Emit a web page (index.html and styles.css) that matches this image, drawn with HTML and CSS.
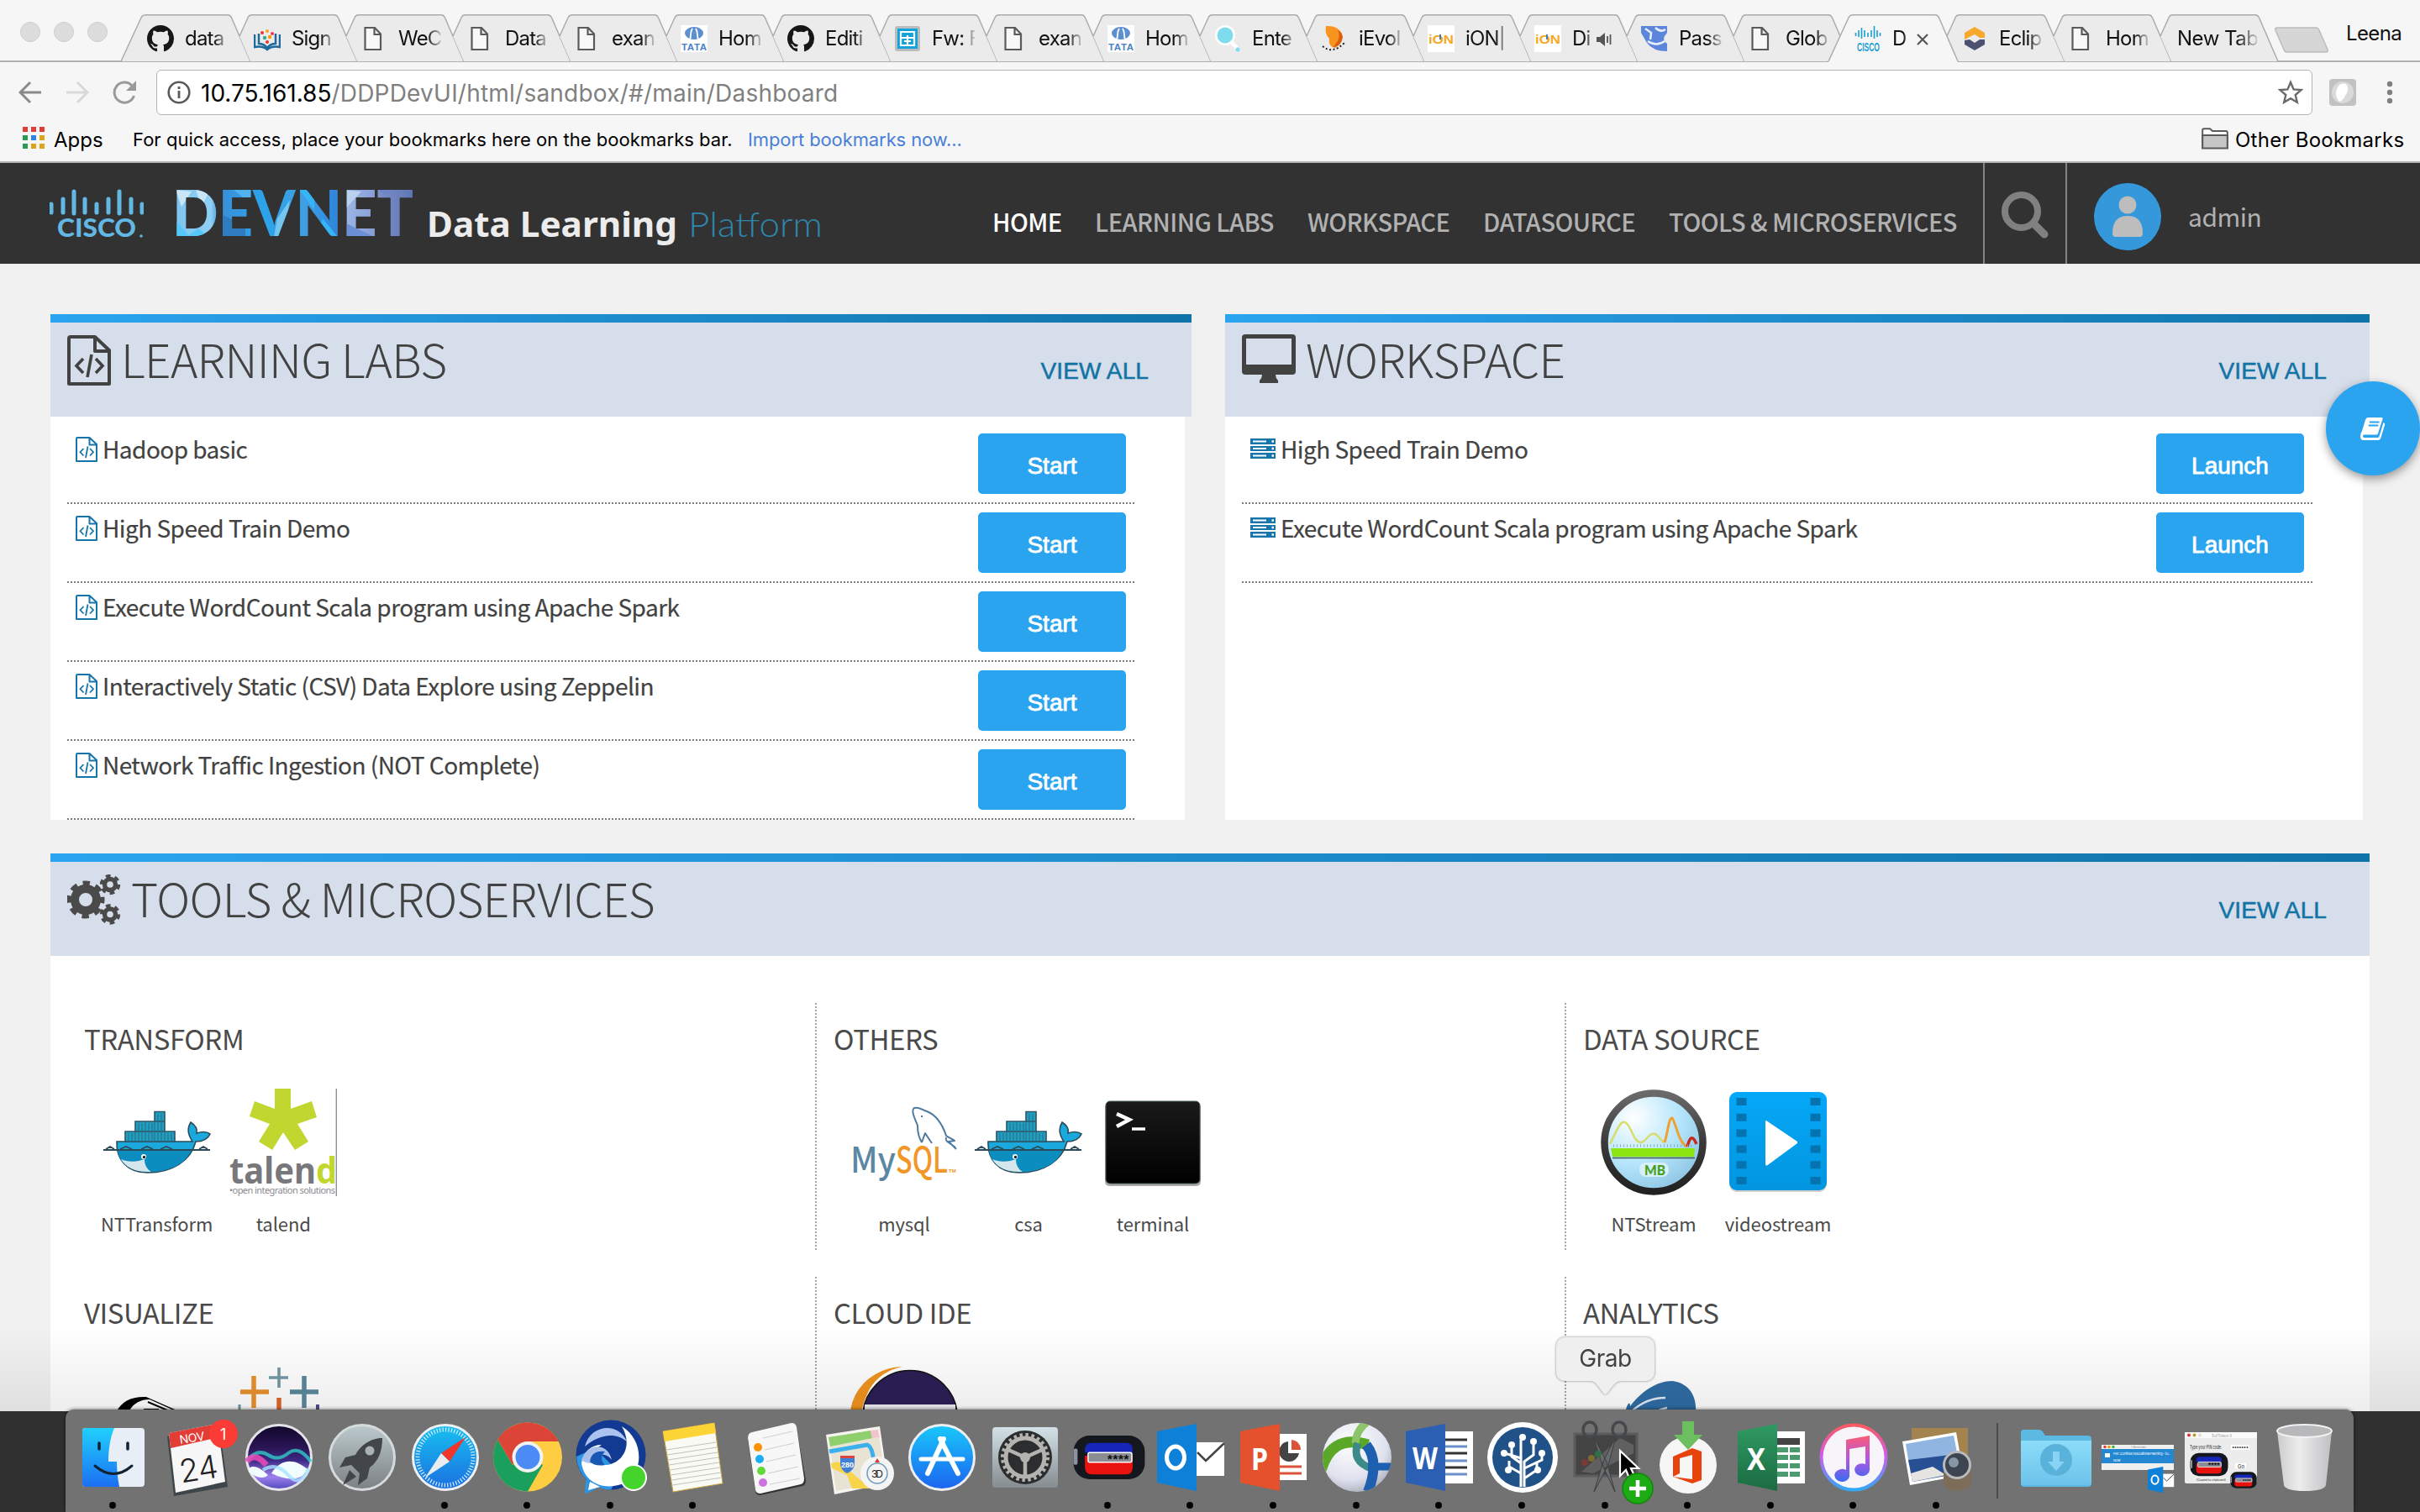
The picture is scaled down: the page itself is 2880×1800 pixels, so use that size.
FILE: index.html
```html
<!DOCTYPE html>
<html lang="en">
<head>
<meta charset="utf-8">
<title>Dashboard</title>
<link rel="stylesheet" href="styles.css">
</head>
<body>
<svg class="defs" aria-hidden="true">
  <defs>
    <linearGradient id="g-finder" x1="0" y1="0" x2="0" y2="1"><stop offset="0" stop-color="#1fd0fd"/><stop offset="1" stop-color="#1c6ff2"/></linearGradient>
    <linearGradient id="g-siri" x1="0" y1="0" x2="0" y2="1"><stop offset="0" stop-color="#10062a"/><stop offset=".35" stop-color="#2b1555"/><stop offset=".55" stop-color="#3d2a86"/><stop offset=".8" stop-color="#9f7fee"/><stop offset="1" stop-color="#4d48b8"/></linearGradient>
    <linearGradient id="g-rocket" x1="0" y1="0" x2="0" y2="1"><stop offset="0" stop-color="#bccacd"/><stop offset="1" stop-color="#7c8083"/></linearGradient>
    <linearGradient id="g-safari" x1="0" y1="0" x2="0" y2="1"><stop offset="0" stop-color="#17c0f0"/><stop offset="1" stop-color="#1b6fe0"/></linearGradient>
    <linearGradient id="g-store" x1="0" y1="0" x2="0" y2="1"><stop offset="0" stop-color="#19c8fb"/><stop offset="1" stop-color="#1c63ef"/></linearGradient>
    <linearGradient id="g-prefs" x1="0" y1="0" x2="0" y2="1"><stop offset="0" stop-color="#d3e2e8"/><stop offset="1" stop-color="#868c90"/></linearGradient>
    <linearGradient id="g-tunes" x1="0" y1="0" x2="0" y2="1"><stop offset="0" stop-color="#fb5b60"/><stop offset=".45" stop-color="#d45be8"/><stop offset="1" stop-color="#31a8f8"/></linearGradient>
    <linearGradient id="g-note" x1="0" y1="0" x2="0" y2="1"><stop offset="0" stop-color="#fb5c74"/><stop offset=".5" stop-color="#b556e0"/><stop offset="1" stop-color="#3a6bf0"/></linearGradient>
    <linearGradient id="g-folder" x1="0" y1="0" x2="0" y2="1"><stop offset="0" stop-color="#8bdcf9"/><stop offset="1" stop-color="#6cc3ea"/></linearGradient>
    <linearGradient id="g-trash" x1="0" y1="0" x2="1" y2="0"><stop offset="0" stop-color="#cfd0d2"/><stop offset=".4" stop-color="#f3f3f4"/><stop offset="1" stop-color="#c3c4c6"/></linearGradient>
    <linearGradient id="g-devnet" x1="0" y1="0" x2="1" y2="0"><stop offset="0" stop-color="#7cc4ee"/><stop offset=".16" stop-color="#8fd0f5"/><stop offset=".2" stop-color="#3a8fd8"/><stop offset=".38" stop-color="#2ca3ea"/><stop offset=".55" stop-color="#3f9fe2"/><stop offset=".68" stop-color="#2f86dc"/><stop offset=".71" stop-color="#9cb8e6"/><stop offset=".83" stop-color="#8b9fd8"/><stop offset=".86" stop-color="#7c8ec6"/><stop offset="1" stop-color="#5c76b4"/></linearGradient>
    <linearGradient id="g-video" x1="0" y1="0" x2="0" y2="1"><stop offset="0" stop-color="#05a8f8"/><stop offset="1" stop-color="#0295df"/></linearGradient>
    <linearGradient id="g-term" x1="0" y1="0" x2="0" y2="1"><stop offset="0" stop-color="#1a1a1a"/><stop offset="1" stop-color="#000"/></linearGradient>
    <linearGradient id="g-ring" x1="0" y1="0" x2="0" y2="1"><stop offset="0" stop-color="#6a6a6a"/><stop offset=".5" stop-color="#3a3a3a"/><stop offset="1" stop-color="#222"/></linearGradient>
    <radialGradient id="g-glass" cx=".3" cy=".25" r=".8"><stop offset="0" stop-color="#ffffff"/><stop offset=".6" stop-color="#b4e4fb"/><stop offset="1" stop-color="#8fc6e4"/></radialGradient>
    <radialGradient id="g-globe" cx=".4" cy=".3" r=".75"><stop offset="0" stop-color="#ffffff"/><stop offset=".7" stop-color="#dfe2ee"/><stop offset="1" stop-color="#a9adba"/></radialGradient>
    <linearGradient id="g-xl" x1="0" y1="0" x2="0" y2="1"><stop offset="0" stop-color="#2f9a63"/><stop offset="1" stop-color="#1b6b41"/></linearGradient>
    <clipPath id="c-devnet"><text class="devnet" x="205" y="87" textLength="287" lengthAdjust="spacingAndGlyphs">DEVNET</text></clipPath>
    <clipPath id="c-globe"><circle cx="49" cy="51" r="41"/></clipPath>

    <symbol id="tab" viewBox="0 0 156 57"><path class="tab-fill" d="M27 56L14 26L24.500 3Q26 .7 29 .7H127Q130 .7 131.500 4L153 56Z"/><path class="tab-line" d="M14 26L24.500 3Q26 .7 29 .7H127Q130 .7 131.500 4L154 56"/></symbol>
    <symbol id="doc" viewBox="0 0 32 32"><path d="M5.500 3H17l7 7.500V29H5.500Z M16.500 3V11H24" fill="#f8f8f8" stroke="#5a5a5a" stroke-width="2.200"/></symbol>
    <symbol id="github" viewBox="0 0 16 16"><path fill="#161616" d="M8 0C3.580 0 0 3.580 0 8c0 3.540 2.290 6.530 5.470 7.590.4.070.550-.170.550-.380 0-.190-.010-.820-.010-1.490-2.010.370-2.530-.490-2.690-.940-.090-.230-.480-.940-.820-1.130-.280-.150-.680-.520-.010-.530.630-.010 1.080.580 1.230.820.720 1.210 1.870.870 2.330.660.070-.520.280-.870.510-1.070-1.780-.2-3.640-.890-3.640-3.950 0-.870.310-1.590.820-2.150-.080-.2-.360-1.020.080-2.120 0 0 .670-.210 2.200.820.640-.180 1.320-.270 2-.270.680 0 1.360.090 2 .270 1.530-1.040 2.200-.820 2.200-.820.440 1.100.160 1.920.080 2.120.510.560.820 1.270.820 2.150 0 3.070-1.870 3.750-3.650 3.950.290.250.540.730.540 1.480 0 1.070-.010 1.930-.010 2.200 0 .210.150.460.550.380A8.013 8.013 0 0016 8c0-4.420-3.580-8-8-8z"/></symbol>
    <symbol id="tata" viewBox="0 0 32 32"><rect width="32" height="32" fill="#fff"/><ellipse cx="16" cy="9.500" rx="11" ry="7.500" fill="#5b8fd0"/><path d="M14 4C11 8 13 12 11 17M18 4C21 8 19 12 21 17" stroke="#fff" stroke-width="1.800" fill="none"/><text x="1" y="29.500" font-family="Liberation Sans" font-weight="700" font-size="11.500" fill="#4a7fc6" textLength="30">TATA</text></symbol>
    <symbol id="ion" viewBox="0 0 32 32"><rect width="32" height="32" fill="#fff"/><text x="1" y="22" font-family="Liberation Sans" font-weight="700" font-size="15" fill="#f6a821" textLength="30" lengthAdjust="spacingAndGlyphs">iON</text><path d="M15 11V17" stroke="#4a7abf" stroke-width="2"/></symbol>
    <symbol id="bars" viewBox="0 0 112 32"><path d="M2 18V28M16 12V28M29 3V29M42 12V28M56 18V28M70 12V28M83 3V29M97 12V28M110 18V28" stroke="currentColor" stroke-width="5" stroke-linecap="round"/></symbol>
    <symbol id="codefile" viewBox="0 0 52 60"><path d="M4 2H33L50 18V58H2V4Q2 2 4 2Z M33 2V19H50" fill="none" stroke="currentColor" stroke-width="4" stroke-linejoin="round"/><path d="M19 28L11 36.500L19 45M34 28L42 36.500L34 45M29 23L24 50" fill="none" stroke="currentColor" stroke-width="3.600"/></symbol>
    <symbol id="server" viewBox="0 0 30 24"><path d="M0 0H30V7H0ZM0 9H30V15H0ZM0 17H30V24H0Z" fill="#1676ab"/><path d="M3 3.500H19M3 12H19M3 20.500H19" stroke="#fff" stroke-width="2"/><path d="M25.500 3.500H28M25.500 12H28M25.500 20.500H28" stroke="#fff" stroke-width="2.500"/></symbol>
    <symbol id="docker" viewBox="0 0 128 128">
      <path d="M16 63H106C101 55 99 48 104 40C110 44 112 49 111 53C117 51 123 51 127 54C124 61 117 63 110 63C104 86 82 100 53 100C28 100 15 84 16 63Z" fill="#1ba8dc" stroke="#2c4a58" stroke-width="1.600"/>
      <path d="M17 73H105C97 91 78 99 53 99C30 99 18 87 17 73Z" fill="#0c8dbf"/>
      <path d="M21 84C30 88 41 87 49 84C49 91 52 96 57 99C38 100 27 94 21 84Z" fill="#d5e6ec"/>
      <path d="M0 73H127M3 72L8 69L13 72M20 72L27 69L34 72M45 72L52 69L59 72M68 72L75 69L82 72M114 72L119 69L124 72" stroke="#2c4a58" stroke-width="1.800" fill="none"/>
      <path d="M26 51H85V63H26ZM38 39H73V51H38ZM61 27.500H73V39H61Z" fill="#1f9fc2" stroke="#2c5566" stroke-width="1.600"/>
      <path d="M38 51V63M50 39V63M61 39V63M73 51V63M30 53V62M34 53V62M42 41V62M46 41V62M54 41V62M58 41V62M65 30V62M69 30V62M77 53V62M81 53V62" stroke="#2c6a80" stroke-width="1"/>
      <circle cx="48" cy="81" r="3" fill="#fff"/><circle cx="48.500" cy="81.500" r="1.700" fill="#222"/>
    </symbol>
    <symbol id="softtoken" viewBox="0 0 90 56"><rect x="1" y="1" width="88" height="54" rx="20" fill="#14181e"/><rect x="1" y="17" width="5" height="20" rx="2" fill="#8b929c"/><path d="M15 22V18Q15 10 24 10H66Q74 10 74 18V22Z" fill="#1726b8"/><path d="M15 26H74V40Q74 49 66 49H24Q15 49 15 40Z" fill="#e8120f"/><rect x="19" y="22" width="54" height="12" rx="2" fill="#8a8d93" stroke="#fff" stroke-width="1.500"/><text x="41" y="36" font-family="Liberation Mono" font-weight="700" font-size="16" fill="#111" textLength="30">****</text></symbol>
    <symbol id="office-o" viewBox="0 0 82 82"><path d="M46 22H80V62H46Z" fill="#fff"/><path d="M48 34L58 44L80 23" stroke="#444" stroke-width="2.500" fill="none"/><path d="M0 9L47 0V80L0 70Z" fill="#0f80d8"/><ellipse cx="22" cy="40" rx="10.500" ry="13" fill="none" stroke="#fff" stroke-width="5"/></symbol>
  </defs>
</svg>

<div class="browser">
  <div class="tabstrip">
    <div class="lights"><i></i><i></i><i></i></div>
    <div class="tabs">
      <div class="tab first"><svg class="shape" viewBox="0 0 156 57"><path class="tab-fill" d="M1 56L24.500 3Q26 .7 29 .7H127Q130 .7 131.500 4L153 56Z"/><path class="tab-line" d="M0 56L24.500 3Q26 .7 29 .7H127Q130 .7 131.500 4L154 56"/></svg><svg class="fav"><use href="#github"/></svg><span>data</span></div>
      <div class="tab"><svg class="shape"><use href="#tab"/></svg><svg class="fav" viewBox="0 0 32 32"><path d="M1 11V26Q10 24 16 29Q22 24 31 26V11M6 10V22Q12 22 16 27Q20 22 26 22V10" fill="none" stroke="#1d6a9c" stroke-width="2.500"/><g><circle cx="10" cy="9" r="2" fill="#e33"/><circle cx="16" cy="7" r="2" fill="#f5a623"/><circle cx="22" cy="10" r="2" fill="#e35"/><circle cx="13" cy="15" r="2.200" fill="#3a9"/><circle cx="19" cy="14" r="2.200" fill="#f90"/><circle cx="16" cy="20" r="2" fill="#e33"/></g></svg><span>Sign</span></div>
      <div class="tab"><svg class="shape"><use href="#tab"/></svg><svg class="fav"><use href="#doc"/></svg><span>WeC</span></div>
      <div class="tab"><svg class="shape"><use href="#tab"/></svg><svg class="fav"><use href="#doc"/></svg><span>Data</span></div>
      <div class="tab"><svg class="shape"><use href="#tab"/></svg><svg class="fav"><use href="#doc"/></svg><span>exan</span></div>
      <div class="tab"><svg class="shape"><use href="#tab"/></svg><svg class="fav"><use href="#tata"/></svg><span>Hom</span></div>
      <div class="tab"><svg class="shape"><use href="#tab"/></svg><svg class="fav"><use href="#github"/></svg><span>Editi</span></div>
      <div class="tab"><svg class="shape"><use href="#tab"/></svg><svg class="fav" viewBox="0 0 32 32"><rect x="1" y="1" width="30" height="30" rx="3" fill="#b9bdc0"/><rect x="4" y="4" width="24" height="24" fill="#14a3dc"/><path d="M8 8H24V24H8Z M8 15H24M16 12V24M12 19H20" fill="none" stroke="#fff" stroke-width="2.200"/></svg><span>Fw: F</span></div>
      <div class="tab"><svg class="shape"><use href="#tab"/></svg><svg class="fav"><use href="#doc"/></svg><span>exan</span></div>
      <div class="tab"><svg class="shape"><use href="#tab"/></svg><svg class="fav"><use href="#tata"/></svg><span>Hom</span></div>
      <div class="tab"><svg class="shape"><use href="#tab"/></svg><svg class="fav" viewBox="0 0 32 32"><path d="M17 17L27 27" stroke="#fff" stroke-width="5"/><circle cx="13" cy="12" r="12" fill="#fff"/><circle cx="13" cy="12" r="9.500" fill="#7fdcee"/><circle cx="28" cy="29" r="2.500" fill="#7fdcee"/></svg><span>Ente</span></div>
      <div class="tab"><svg class="shape"><use href="#tab"/></svg><svg class="fav" viewBox="0 0 32 32"><path d="M6 1Q20 0 25 10Q27 22 17 27Q8 25 10 16Q4 10 6 1Z" fill="#f7941d"/><path d="M20 6Q25 16 14 26Q24 26 26 14Q25 8 20 6Z" fill="#d95f12"/><path d="M2 25Q14 35 28 21" stroke="#222" stroke-width="2" stroke-dasharray="2 2.500" fill="none"/></svg><span>iEvol</span></div>
      <div class="tab"><svg class="shape"><use href="#tab"/></svg><svg class="fav"><use href="#ion"/></svg><span>iON|</span></div>
      <div class="tab sound"><svg class="shape"><use href="#tab"/></svg><svg class="fav"><use href="#ion"/></svg><span>Di</span><svg class="mute" viewBox="0 0 22 20"><path d="M1 7H5L11 2V18L5 13H1Z" fill="#555"/><path d="M14 6V14M17.500 4V16" stroke="#555" stroke-width="1.800"/></svg></div>
      <div class="tab"><svg class="shape"><use href="#tab"/></svg><svg class="fav" viewBox="0 0 32 32"><path d="M0 1H31V9L28 13Q25 18 31 22V31Q14 31 7 21L0 9Z" fill="#5b86dc"/><path d="M5 4L12 9L11 17M17 3Q23 9 29 5M8 19Q18 26 28 19" stroke="#e8effc" stroke-width="2.500" fill="none"/></svg><span>Pass</span></div>
      <div class="tab"><svg class="shape"><use href="#tab"/></svg><svg class="fav"><use href="#doc"/></svg><span>Glob</span></div>
      <div class="tab active"><svg class="shape" viewBox="0 0 156 57"><path class="tab-fill" d="M0 57L24.500 3Q26 .7 29 .7H127Q130 .7 131.500 4L154 57Z"/><path class="tab-line" d="M0 56L24.500 3Q26 .7 29 .7H127Q130 .7 131.500 4L154 56"/></svg><svg class="fav" viewBox="0 0 32 32"><path d="M1.500 9V13M5 6V14M8.500 3V16M12 6V14M16 9V14M20 6V14M23.500 1V16M27 6V14M30.500 9V13" stroke="#1a9fd4" stroke-width="1.600"/><text x="3" y="31" font-family="Liberation Sans" font-weight="700" font-size="14" fill="#1a9fd4" textLength="27" lengthAdjust="spacingAndGlyphs">CISCO</text></svg><span>D</span><svg class="close" viewBox="0 0 16 16"><path d="M2 2L14 14M14 2L2 14" stroke="#555" stroke-width="2.200"/></svg></div>
      <div class="tab"><svg class="shape"><use href="#tab"/></svg><svg class="fav" viewBox="0 0 32 32"><path d="M16 2L28 9V15H22L16 11L10 14L4 17V9Z" fill="#f6a92d"/><path d="M16 30L28 23V17L22 17L16 21L10 17L4 18V23Z" fill="#4c5170"/></svg><span>Eclip</span></div>
      <div class="tab"><svg class="shape"><use href="#tab"/></svg><svg class="fav"><use href="#doc"/></svg><span>Hom</span></div>
      <div class="tab blank"><svg class="shape"><use href="#tab"/></svg><span>New Tab</span></div>
    </div>
    <svg class="newtab" viewBox="0 0 66 34"><path d="M4 2H50Q53 2 54 5L64 28Q65 31 62 31H16Q13 31 12 28L2 5Q1 2 4 2Z" fill="#d6d6d6" stroke="#bcbcbc" stroke-width="1.500"/></svg>
    <span class="profile">Leena</span>
  </div>

  <div class="toolbar">
    <svg class="nav-icon" viewBox="0 0 28 28"><path d="M27 14H3M14 2L2 14L14 26" fill="none" stroke="#8a8a8a" stroke-width="3"/></svg>
    <svg class="nav-icon" viewBox="0 0 28 28"><path d="M1 14H25M14 2L26 14L14 26" fill="none" stroke="#d8d8d8" stroke-width="3"/></svg>
    <svg class="nav-icon" viewBox="0 0 28 28"><path d="M23 6A12 12 0 1 0 25.500 18" fill="none" stroke="#9a9a9a" stroke-width="3"/><path d="M28 0V12H16Z" fill="#9a9a9a"/></svg>
    <div class="omnibox">
      <svg class="info" viewBox="0 0 28 28"><circle cx="14" cy="14" r="12.300" fill="none" stroke="#5a5a5a" stroke-width="2.600"/><path d="M14 12V21M14 7V10" stroke="#5a5a5a" stroke-width="2.800"/></svg>
      <span class="url"><b>10.75.161.85</b>/DDPDevUI/html/sandbox/#/main/Dashboard</span>
      <svg class="star" viewBox="0 0 30 30"><path d="M15 3L18.600 11.400L27.500 12.100L20.700 18L22.800 26.800L15 22.100L7.200 26.800L9.300 18L2.500 12.100L11.400 11.400Z" fill="none" stroke="#6a6a6a" stroke-width="2.400"/></svg>
    </div>
    <svg class="ext" viewBox="0 0 32 32"><rect width="32" height="32" rx="4" fill="#c2c2c2"/><circle cx="16" cy="16" r="13" fill="#dadada"/><path d="M9 12Q12 4 20 6Q25 12 19 20Q16 26 12 27Q6 20 9 12Z" fill="#fff"/></svg>
    <svg class="dots" viewBox="0 0 8 28"><circle cx="4" cy="4" r="3.200"/><circle cx="4" cy="14" r="3.200"/><circle cx="4" cy="24" r="3.200"/></svg>
  </div>

  <div class="bookmarks">
    <div class="apps-grid"><i class="r"></i><i class="r"></i><i class="r"></i><i class="g"></i><i class="b"></i><i class="y"></i><i class="g"></i><i class="y"></i><i class="y"></i></div>
    <span class="bm-apps">Apps</span>
    <span class="bm-hint">For quick access, place your bookmarks here on the bookmarks bar.</span>
    <span class="bm-link">Import bookmarks now...</span>
    <svg class="folder" viewBox="0 0 32 26"><path d="M1.200 24V3Q1.200 1.200 3 1.200H10L13 4H29Q30.800 4 30.800 6V24Z" fill="#fff" stroke="#5a5a5a" stroke-width="2"/><path d="M1.200 9H30.800V24.500H1.200Z" fill="#c6c6c6" stroke="#5a5a5a" stroke-width="2"/></svg>
    <span class="bm-other">Other Bookmarks</span>
  </div>

  <div class="page">
    <header class="site-header">
      <svg class="logo" viewBox="0 0 930 120">
        <g color="#62b8e3"><use href="#bars" x="59" y="31" width="112" height="32"/></g>
        <text class="cisco" x="68" y="88" textLength="94" lengthAdjust="spacingAndGlyphs">CISCO</text><circle cx="168" cy="87" r="1.800" fill="#62b8e3"/>
        <text class="devnet" x="205" y="87" textLength="287" lengthAdjust="spacingAndGlyphs">DEVNET</text>
        <g clip-path="url(#c-devnet)">
          <path d="M209 32L228 34L216 52Z M233 32H250L240 52Z" fill="#c9e6f7"/>
          <path d="M209 68L226 88H209Z M236 78L250 88H222Z" fill="#55c8fa"/>
          <path d="M262 60L292 76V88H262Z" fill="#2f7cc0"/>
          <path d="M278 32H300V50Z" fill="#4fb2ee"/>
          <path d="M330 66L345 44L338 88H326Z" fill="#74c6ef"/>
          <path d="M356 32L374 56V32Z M384 66L402 88H376Z" fill="#37b4f6"/>
          <path d="M408 32L430 34L410 56Z" fill="#b9d0ee"/>
          <path d="M408 70L446 88H408Z" fill="#6d8fd6"/>
          <path d="M450 32L470 46V32Z" fill="#7083c4"/>
        </g>
        <text class="dl" x="508" y="88" textLength="298" lengthAdjust="spacingAndGlyphs">Data Learning</text>
        <text class="pf" x="819" y="88" textLength="160" lengthAdjust="spacingAndGlyphs">Platform</text>
      </svg>
      <nav>
        <a class="n1 on">HOME</a><a class="n2">LEARNING LABS</a><a class="n3">WORKSPACE</a><a class="n4">DATASOURCE</a><a class="n5">TOOLS &amp; MICROSERVICES</a>
      </nav>
      <div class="search"><svg viewBox="0 0 56 56"><circle cx="23.500" cy="23.500" r="19.500" fill="none" stroke="#808080" stroke-width="8"/><path d="M38 38L51 51" stroke="#808080" stroke-width="9" stroke-linecap="round"/></svg></div>
      <svg class="avatar" viewBox="0 0 80 80"><circle cx="40" cy="40" r="40" fill="#3498db"/><circle cx="40" cy="26" r="10.500" fill="#bdbdbd"/><path d="M22 60C22 46 28 39 40 39S58 46 58 60Q58 64 54 64H26Q22 64 22 60Z" fill="#bdbdbd"/></svg>
      <span class="user">admin</span>
    </header>

    <main>
      <div class="top-row">
        <section class="panel labs">
          <div class="panel-head"><svg class="h-code"><use href="#codefile"/></svg><h2 class="t1">LEARNING LABS</h2><a class="view">VIEW ALL</a></div>
          <div class="panel-body">
            <div class="row"><svg class="i-code"><use href="#codefile"/></svg><span>Hadoop basic</span><button>Start</button></div>
            <div class="row"><svg class="i-code"><use href="#codefile"/></svg><span>High Speed Train Demo</span><button>Start</button></div>
            <div class="row"><svg class="i-code"><use href="#codefile"/></svg><span>Execute WordCount Scala program using Apache Spark</span><button>Start</button></div>
            <div class="row"><svg class="i-code"><use href="#codefile"/></svg><span>Interactively Static (CSV) Data Explore using Zeppelin</span><button>Start</button></div>
            <div class="row"><svg class="i-code"><use href="#codefile"/></svg><span>Network Traffic Ingestion (NOT Complete)</span><button>Start</button></div>
          </div>
        </section>
        <section class="panel work">
          <div class="panel-head"><svg class="h-desk" viewBox="0 0 64 58"><path d="M4 0H60Q64 0 64 4V44Q64 48 60 48H40Q40 52 43 55V58H21V55Q24 52 24 48H4Q0 48 0 44V4Q0 0 4 0ZM5 5V36H59V5Z" fill="#424242" fill-rule="evenodd"/></svg><h2 class="t2">WORKSPACE</h2><a class="view">VIEW ALL</a></div>
          <div class="panel-body">
            <div class="row"><svg class="i-srv"><use href="#server"/></svg><span>High Speed Train Demo</span><button>Launch</button></div>
            <div class="row"><svg class="i-srv"><use href="#server"/></svg><span>Execute WordCount Scala program using Apache Spark</span><button>Launch</button></div>
          </div>
        </section>
      </div>

      <section class="panel tools">
        <div class="panel-head"><svg class="h-cogs" viewBox="0 0 64 60">
          <g fill="none" stroke="#4a4a4a"><circle cx="22" cy="30" r="13" stroke-width="10"/><circle cx="22" cy="30" r="19.500" stroke-width="6" stroke-dasharray="8.300 7.015" stroke-dashoffset="4"/>
          <circle cx="51" cy="12" r="6.500" stroke-width="5.400"/><circle cx="51" cy="12" r="10.200" stroke-width="4" stroke-dasharray="5.600 5.080"/>
          <circle cx="51" cy="47.500" r="6.500" stroke-width="5.400"/><circle cx="51" cy="47.500" r="10.200" stroke-width="4" stroke-dasharray="5.600 5.080"/></g></svg><h2 class="t3">TOOLS &amp; MICROSERVICES</h2><a class="view">VIEW ALL</a></div>
        <div class="cats">
          <div class="cat"><h3>TRANSFORM</h3><div class="tiles">
            <figure><svg viewBox="0 0 128 128"><use href="#docker"/></svg><figcaption>NTTransform</figcaption></figure>
            <figure><svg viewBox="0 0 128 128"><path d="M54 0H73V24L98 15L104 34L81 42L94 63L78 73L64 52L51 73L35 63L48 42L24 33L30 15L54 24Z" fill="#c1d72f"/><text class="tal" x="0" y="113" textLength="103" lengthAdjust="spacingAndGlyphs">talen</text><text class="tal lime" x="103" y="113" textLength="25" lengthAdjust="spacingAndGlyphs">d</text><text x="0" y="125" font-family="Noto Sans" font-size="11" fill="#8c8b90" textLength="126">•open integration solutions</text><path d="M127.300 0V128" stroke="#888" stroke-width="1.300"/></svg><figcaption>talend</figcaption></figure>
          </div></div>
          <div class="cat"><h3>OTHERS</h3><div class="tiles">
            <figure><svg viewBox="0 0 128 128"><g fill="none" stroke="#4d7a9e" stroke-width="2" stroke-linejoin="round"><path d="M85 64C80 56 80 48 80 44C76 34 72 26 76 23C82 21 86 26 91 27C104 32 110 44 114 56C118 59 122 60 124 62L117 63L126 72M125 70C118 64 112 63 114 58M85 64L89 53L97 65"/><path d="M84 33H86"/></g><text class="my" x="0" y="100" fill="#5b87a3" textLength="54" lengthAdjust="spacingAndGlyphs">My</text><text class="my" x="54" y="100" fill="#f29727" textLength="62" lengthAdjust="spacingAndGlyphs">SQL</text><text x="117" y="100" font-family="Liberation Sans" font-weight="700" font-size="6" fill="#f29727">TM</text></svg><figcaption>mysql</figcaption></figure>
            <figure><svg viewBox="0 0 128 128"><use href="#docker"/></svg><figcaption>csa</figcaption></figure>
            <figure><svg viewBox="0 0 128 128"><rect x="7" y="17" width="114" height="99" rx="5" fill="#00000055"/><rect x="8" y="15" width="112" height="98" rx="5" fill="url(#g-term)" stroke="#4b5c5c" stroke-width="1"/><path d="M21 30L36 37L21 45" fill="none" stroke="#fff" stroke-width="4.500"/><path d="M39 48H55" stroke="#fff" stroke-width="3.500"/></svg><figcaption>terminal</figcaption></figure>
          </div></div>
          <div class="cat"><h3>DATA SOURCE</h3><div class="tiles">
            <figure><svg viewBox="0 0 128 128"><circle cx="64" cy="64" r="58.500" fill="url(#g-glass)" stroke="url(#g-ring)" stroke-width="8.500"/><path d="M12 66C20 50 24 38 30 40C38 44 40 66 50 64C58 60 58 52 66 54C72 58 74 64 77 64" fill="none" stroke="#d8dc6a" stroke-width="2.500"/><path d="M77 64C81 52 82 34 86 35C91 42 94 66 104 69" fill="none" stroke="#f0a030" stroke-width="3"/><path d="M104 69C107 58 110 54 115 66" fill="none" stroke="#c62a20" stroke-width="3.500"/><path d="M16 68H112" stroke="#88a9b8" stroke-width="3" stroke-dasharray="1 3"/><path d="M13 71H113L112 81H15Z" fill="#8be40e"/><path d="M15 82.500H113" stroke="#3c5a4a" stroke-width="1.500"/><rect x="47" y="88" width="35" height="17" rx="8" fill="#d8eef8"/><text x="53" y="103" font-family="Lato" font-weight="900" font-size="16" fill="#43a01c" textLength="25" lengthAdjust="spacingAndGlyphs">MB</text></svg><figcaption>NTStream</figcaption></figure>
            <figure><svg viewBox="0 0 128 128"><rect x="6" y="6" width="116" height="117" rx="9" fill="#00000030"/><rect x="6" y="4" width="116" height="117" rx="9" fill="url(#g-video)"/><path d="M20.500 11V115M108.500 11V115" stroke="#0573b0" stroke-width="12" stroke-dasharray="9 9.800"/><path d="M49 39Q49 38 50 38L87 63V65L51 91.500Q49 92 49 90Z" fill="#fff"/></svg><figcaption>videostream</figcaption></figure>
          </div></div>
          <div class="cat"><h3>VISUALIZE</h3><div class="tiles">
            <figure class="wide"><svg viewBox="0 0 128 128"><path d="M12 66C16 50 28 40 50 41L98 62V70H12Z" fill="#000"/><path d="M28 62C32 50 42 44 54 44L94 62L80 70H26Z" fill="#fff"/><path d="M52 47L92 64M48 56H64V64H48Z" stroke="#000" stroke-width="2"/></svg></figure>
            <figure><svg viewBox="0 0 128 128"><g stroke-width="5.500" fill="none"><path d="M26 16V54M10 35H44" stroke="#e8912d"/><path d="M86 16V54M69 35H103" stroke="#5b879b"/><path d="M56 42V80M40 61H73" stroke="#e0652a"/></g><path d="M56 6V30M44 18H67" stroke="#7199a6" stroke-width="3.600"/><path d="M9 50V70M-2 60H20" stroke="#6a9aa8" stroke-width="3"/><path d="M102 50V70M91 60H113" stroke="#4d5090" stroke-width="4"/></svg></figure>
          </div></div>
          <div class="cat"><h3>CLOUD IDE</h3><div class="tiles">
            <figure><svg viewBox="0 0 128 128"><path d="M62 5C24 6 0 36 0 62V80H16C10 40 28 12 62 5Z" fill="#f0931f"/><circle cx="71" cy="66" r="58" fill="#fff"/><circle cx="71" cy="66" r="56.500" fill="#2b1f55" stroke="#111" stroke-width="1.500"/><path d="M17 50H125V56H17Z" fill="#efeff4"/></svg></figure>
          </div></div>
          <div class="cat"><h3>ANALYTICS</h3><div class="tiles">
            <figure><svg viewBox="0 0 128 128"><path d="M31 56C33 48 36 46 36 52C50 34 68 22 86 22C104 24 116 38 114 60H31Z" fill="#2f6ca3"/><path d="M36 60C48 48 62 42 78 42M62 62C68 57 74 55 80 54" stroke="#dfeaf4" stroke-width="2.500" fill="none"/></svg></figure>
          </div></div>
        </div>
      </section>
    </main>
  </div>
</div>

<div class="fab"><svg viewBox="0 0 30 28"><path d="M9 1H25Q27 1 26.500 3L21 20Q20.500 21.500 19 21.500H4Q3 22 3 23.500L4 25H20Q22 25 22.500 23.500L27.500 7Q29.500 8 29 10L24.500 25Q23.500 28 21 28H4Q0 28 0 23.500Q0 20 2 17L6 4Q7 1 9 1Z" fill="#fff"/><path d="M11 6.500H22.500M9.800 10.500H21.300" stroke="#2ba4ef" stroke-width="1.800"/></svg></div>

<div class="tip">Grab<svg viewBox="0 0 36 17"><path d="M0 0C8 0 14 16 17.500 16S27 0 36 0Z" fill="#efefef"/></svg></div>

<div class="dock-shade"></div>
<div class="dock">
  <div class="app run"><svg viewBox="0 0 98 98"><rect x="12" y="16" width="74" height="70" rx="4" fill="#e8eef6"/><path d="M16 16H50C45 28 43 42 43 56H53C53 66 54 76 56 86H16Q12 86 12 82V20Q12 16 16 16Z" fill="url(#g-finder)"/><path d="M32 34V41M66 34V41" stroke="#123" stroke-width="3.500" stroke-linecap="round"/><path d="M27 61Q49 80 71 61" fill="none" stroke="#123" stroke-width="3" stroke-linecap="round"/></svg></div>
  <div class="app"><svg viewBox="-2 0 98 98"><path d="M12 26L74 14L84 86L20 97Z" fill="#3d464b"/><path d="M14 22L72 11L81 80L22 93Z" fill="#f7f7f7"/><path d="M14 22L72 11L74 27L16 40Z" fill="#e23c35"/><g transform="rotate(-9 48 50)"><text x="30" y="32" font-family="Inter" font-size="14" fill="#fff" textLength="30">NOV</text><text x="24" y="78" font-family="Inter" font-weight="300" font-size="38" fill="#222" textLength="46" lengthAdjust="spacingAndGlyphs">24</text></g><circle cx="79" cy="23" r="17" fill="#fb3b35"/><text x="75" y="30" font-family="Inter" font-size="18" fill="#fff">1</text></svg></div>
  <div class="app"><svg viewBox="0 0 98 98"><circle cx="49" cy="51" r="38.500" fill="url(#g-siri)" stroke="#e4e4ea" stroke-width="3"/><path d="M11 54Q24 40 36 48T60 46T87 56" stroke="#2fd6cc" stroke-width="4" fill="none" opacity=".75"/><path d="M11 56Q20 44 34 60" stroke="#f04bb8" stroke-width="7" fill="none" opacity=".85"/><path d="M13 64C20 58 30 66 36 72C30 78 20 74 13 68Z M40 70C50 54 66 50 84 66C76 78 60 80 40 70Z" fill="#f1fdff"/><path d="M30 66Q46 56 60 72T84 64" stroke="#a8e4ff" stroke-width="4" fill="none" opacity=".8"/></svg></div>
  <div class="app"><svg viewBox="0 0 98 98"><circle cx="49" cy="51" r="38.500" fill="url(#g-rocket)" stroke="#d5dadc" stroke-width="3"/><path d="M73 28C58 28 46 38 41 48L29 51L22 63L36 60L46 70L44 84L55 76L58 63C68 56 73 44 73 28Z" fill="#42464a"/><circle cx="58" cy="43" r="5.500" fill="#a9b2b5"/><path d="M34 66L42 74L26 84Z" fill="#42464a"/></svg></div>
  <div class="app run"><svg viewBox="0 0 98 98"><circle cx="49" cy="51" r="38.500" fill="url(#g-safari)" stroke="#eef1f4" stroke-width="3"/><circle cx="49" cy="51" r="33" fill="none" stroke="#d7efff" stroke-width="5" stroke-dasharray="1.200 2.250"/><path d="M73 27L54 56L44 46Z" fill="#f0352b"/><path d="M25 75L44 46L54 56Z" fill="#e9edf0"/></svg></div>
  <div class="app run"><svg viewBox="0 0 98 98"><circle cx="49" cy="50.500" r="41" fill="#ffcd41"/><path d="M13.500 30A41 41 0 0 0 49 91.500L67 60L49 50L31 60Z" fill="#1a9f5c"/><path d="M13.500 30A41 41 0 0 1 84.500 30L86 32H49L31 60Z" fill="#dc4437"/><circle cx="49" cy="50.500" r="18.500" fill="#f2f2f2"/><circle cx="49" cy="50.500" r="14.500" fill="#4c8bf5"/></svg></div>
  <div class="app run"><svg viewBox="0 0 98 98"><path d="M20 70L18 94Q34 90 38 80Z" fill="#2d97e4"/><circle cx="49" cy="48" r="41.500" fill="#123a93"/><path d="M8 50A41 41 0 0 0 49 89.500L60 70L30 40Z" fill="#2d97e4"/><path d="M62 14C88 30 88 66 68 80C46 92 18 84 14 58C16 44 26 36 38 36C24 44 30 60 44 60C62 58 76 38 62 14Z" fill="#fff"/><path d="M18 38C24 12 58 8 68 32C54 20 34 24 18 38Z" fill="#a9c2f0"/><path d="M14 54C22 32 46 34 50 54C42 44 30 46 26 58Q18 58 14 54Z" fill="#a9c0ea"/><path d="M24 56Q26 42 42 44Q34 52 42 60Q30 62 24 56Z" fill="#1a56b4"/><path d="M24 80L36 86L22 90Z" fill="#fff"/><circle cx="76" cy="75" r="16" fill="#fff"/><circle cx="76" cy="75" r="14" fill="#45d42b"/></svg></div>
  <div class="app run"><svg viewBox="0 0 98 98"><path d="M13 20L74 10L84 82L25 92Z" fill="#fafaf5" stroke="#c9a441" stroke-width="1"/><path d="M13 20L74 10L76 22L15 32Z" fill="#fdd436"/><g stroke="#c2c2be" stroke-width="1.200"><path d="M17 42L76 33M18 48L77 39M19 54L78 45M20 60L79 51M21 66L80 57M22 72L81 63M23 78L82 69M24 84L83 75"/></g></svg></div>
  <div class="app"><svg viewBox="0 0 98 98"><path d="M15 30Q15 24 20 23L68 12Q72 12 73 17L84 78Q84 84 80 85L30 96Q25 96 24 92Z" fill="#333"/><path d="M15 28Q15 22 20 21L67 10Q72 10 73 15L82 76Q82 82 78 83L30 94Q25 94 24 90Z" fill="#f7f7f7"/><circle cx="27" cy="39" r="5" fill="#fb9206"/><circle cx="29" cy="53" r="5" fill="#1badf8"/><circle cx="31" cy="67" r="5" fill="#63da38"/><circle cx="33" cy="81" r="5" fill="#cc73e1"/><path d="M33 28L68 20M35 42L70 34M37 56L72 48M39 70L75 62M41 83L77 76" stroke="#cfcfcf" stroke-width="1.200"/></svg></div>
  <div class="app"><svg viewBox="0 0 98 98"><path d="M9 24L73 14L83 82L19 95Z" fill="#f6f4ee"/><path d="M12 27L71 18L80 79L21 91Z" fill="#e9e3d4"/><path d="M12 27L62 19L64 28L14 38Z" fill="#8fcf6e"/><path d="M62 19L71 18L73 27L64 28Z" fill="#f2c3cf"/><path d="M13 44L58 36Q64 38 66 56" stroke="#3cb0ec" stroke-width="5" fill="none"/><path d="M15 58L24 56L62 88L40 88L34 72L16 64Z" fill="#f8d44a"/><path d="M26 50H43V58Q43 66 34 70Q26 66 26 58Z" fill="#3f7fd6"/><path d="M26 49H43V52H26Z" fill="#d9453c"/><text x="27" y="63" font-family="Liberation Sans" font-weight="700" font-size="9" fill="#fff">280</text><circle cx="70" cy="70" r="20" fill="#f4f4f4"/><circle cx="70" cy="70" r="12" fill="none" stroke="#6c9cbe" stroke-width="1.500"/><text x="63" y="75" font-family="Inter" font-size="12" fill="#222" textLength="14">3D</text><path d="M67 57L70 52L73 57Z" fill="#e03a2e"/></svg></div>
  <div class="app"><svg viewBox="0 0 98 98"><circle cx="49" cy="51" r="38.500" fill="url(#g-store)" stroke="#edf0f3" stroke-width="3"/><g stroke="#fff" stroke-width="6" stroke-linecap="round"><path d="M51 29L32 70M47 29L68 70"/><path d="M24 53H74" stroke-width="5"/></g></svg></div>
  <div class="app"><svg viewBox="0 0 98 98"><rect x="10" y="15" width="78" height="72" rx="4" fill="url(#g-prefs)"/><circle cx="49" cy="51" r="32" fill="#2c2d2f"/><circle cx="49" cy="51" r="23" fill="none" stroke="#b4b3b0" stroke-width="5"/><circle cx="49" cy="51" r="27" fill="none" stroke="#b4b3b0" stroke-width="4" stroke-dasharray="3.500 3.569"/><path d="M49 51L29 42M49 51L49 74M49 51L69 42" stroke="#b4b3b0" stroke-width="4.500"/><circle cx="49" cy="51" r="6" fill="#b4b3b0"/></svg></div>
  <div class="app run"><svg viewBox="0 0 98 98"><use href="#softtoken" x="5" y="24" width="90" height="54"/></svg></div>
  <div class="app run"><svg viewBox="0 0 98 98"><use href="#office-o" x="9" y="11" width="82" height="82"/></svg></div>
  <div class="app run"><svg viewBox="0 0 98 98"><path d="M50 23H88V78H50Z" fill="#fff"/><path d="M66 32A12 12 0 1 0 79 46H66Z" fill="#444"/><path d="M70 30A12 12 0 0 1 81 42H70Z" fill="#d9543a"/><path d="M56 62H82M56 70H82" stroke="#d9543a" stroke-width="3"/><path d="M9 20L56 11V91L9 81Z" fill="#e4512c"/><text class="let" x="22" y="66" textLength="20" lengthAdjust="spacingAndGlyphs">P</text></svg></div>
  <div class="app run"><svg viewBox="0 0 98 98"><circle cx="49" cy="51" r="41" fill="url(#g-globe)"/><g clip-path="url(#c-globe)" fill="none"><path d="M6 66C14 40 30 26 62 36" stroke="#5ba727" stroke-width="13"/><path d="M62 8Q48 18 47 34" stroke="#8cc46a" stroke-width="9"/><path d="M50 34Q42 56 66 64" stroke="#3d8a8a" stroke-width="9"/><path d="M60 36Q76 56 62 92" stroke="#1f5faf" stroke-width="12"/><path d="M62 62H92" stroke="#1f5faf" stroke-width="9"/></g></svg></div>
  <div class="app run"><svg viewBox="0 0 98 98"><path d="M50 20H89V82H50Z" fill="#fff"/><path d="M56 30H82M56 46H82M56 63H82" stroke="#333" stroke-width="3"/><path d="M56 38H82M56 55H82M56 71H82" stroke="#6d8fc7" stroke-width="3"/><path d="M9 20L56 11V91L9 81Z" fill="#2b5fb4"/><text class="let" x="17" y="65" textLength="30" lengthAdjust="spacingAndGlyphs">W</text></svg></div>
  <div class="app run"><svg viewBox="0 0 98 98"><circle cx="49" cy="51" r="42" fill="#fff"/><circle cx="49" cy="51" r="36" fill="#215287"/><g fill="none" stroke="#fff" stroke-width="3"><path d="M47 86V30M51 86V56L62 48V34M47 58L36 50V38M47 70L33 62V55M51 76L66 66V58M47 52L28 46M51 64L72 54V47"/></g><g fill="#fff"><circle cx="49" cy="27" r="4"/><circle cx="36" cy="36" r="4"/><circle cx="62" cy="32" r="4"/><circle cx="27" cy="46" r="4"/><circle cx="72" cy="46" r="4"/><circle cx="32" cy="66" r="4"/><circle cx="67" cy="66" r="4"/></g></svg></div>
  <div class="app run"><svg viewBox="0 0 98 98"><rect x="12" y="23" width="74" height="50" fill="#444" stroke="#5c5c5c" stroke-width="3"/><path d="M20 68L66 28L82 36V46L34 70Z" fill="#606060"/><g fill="none" stroke="#45484b" stroke-width="3.500"><ellipse cx="30" cy="18" rx="8" ry="9"/><ellipse cx="65" cy="18" rx="8" ry="9"/></g><path d="M34 26L50 56L60 92L45 60ZM61 26L46 56L35 92L52 60Z" fill="#6a6d70" stroke="#3c3e40" stroke-width="1"/><circle cx="24" cy="57" r="4" fill="#7c3a36"/><circle cx="32" cy="52" r="4" fill="#7d6a30"/><circle cx="40" cy="47" r="4" fill="#2f7046"/></svg></div>
  <div class="app run"><svg viewBox="0 0 98 98"><circle cx="49" cy="60" r="34" fill="#f6f6f6"/><path d="M42 8H56V24H66L49 42L32 24H42Z" fill="#6cbf5f"/><path d="M31 50L54 40L65 44V78L54 82L31 74L54 77V48L39 52V70L31 74Z" fill="#e8420d"/></svg></div>
  <div class="app run"><svg viewBox="0 0 98 98"><path d="M50 20H89V82H50Z" fill="#fff"/><path d="M56 28H83V36H56Z" fill="#444"/><g fill="#4b9a70"><path d="M56 39H69V45H56ZM71 39H83V45H71ZM56 48H69V54H56ZM71 48H83V54H71ZM56 58H69V64H56ZM71 58H83V64H71ZM56 68H69V74H56ZM71 68H83V74H71Z"/></g><path d="M9 20L56 11V91L9 81Z" fill="url(#g-xl)"/><text class="let" x="20" y="66" textLength="22" lengthAdjust="spacingAndGlyphs">X</text></svg></div>
  <div class="app run"><svg viewBox="0 0 98 98"><circle cx="49" cy="51" r="38.500" fill="#f8f5fa" stroke="url(#g-tunes)" stroke-width="4"/><path d="M40 30L68 25V66A9 7.500 0 1 1 63 59V38L44 41V74A9 7.500 0 1 1 40 66Z" fill="url(#g-note)"/></svg></div>
  <div class="app run"><svg viewBox="0 0 98 98"><path d="M19 16H86V72H19Z" fill="#a5834f"/><path d="M8 32L72 21L81 72L17 84Z" fill="#fff"/><path d="M12 35L69 25L74 50L16 60Z" fill="#8fb5e0"/><path d="M15 54L73 47L77 70L20 80Z" fill="#274f94"/><path d="M18 70L44 62L60 72L20 80Z" fill="#e6e4e0"/><path d="M57 62H90V80Q90 90 73 91Q57 90 57 80Z" fill="#7b6d58"/><circle cx="73" cy="60" r="15.500" fill="#3c4550" stroke="#b8babd" stroke-width="3"/><circle cx="69" cy="57" r="6" fill="#8796a5"/></svg></div>
  <div class="dock-sep"></div>
  <div class="app"><svg viewBox="0 0 98 98"><path d="M7 22Q7 18 10 18H28Q32 18 34 22L36 25H87Q91 25 91 29V82Q91 86 87 86H11Q7 86 7 82Z" fill="#5cb9e2"/><path d="M7 31H91V82Q91 84 87 84H11Q7 84 7 82Z" fill="url(#g-folder)"/><circle cx="49" cy="54" r="19" fill="#58b2d9"/><path d="M45 44H53V56H59L49 67L39 56H45Z" fill="#86d3f3"/></svg></div>
  <div class="app"><svg viewBox="0 0 98 98"><rect x="5" y="36" width="86" height="30" fill="#f0f0f0"/><path d="M5 41H91V58H5Z" fill="#2387d2"/><circle cx="9" cy="38.500" r="1.700" fill="#e33"/><circle cx="14" cy="38.500" r="1.700" fill="#e90"/><circle cx="19" cy="38.500" r="1.700" fill="#3b3"/><text x="40" y="40" font-family="Inter" font-size="3.500" fill="#888">1 Reminder</text><rect x="9" y="46" width="6" height="5" fill="#fff"/><text x="19" y="47.500" font-family="Inter" font-size="4" fill="#fff" textLength="68">FW: COntinue Educational Planning - iO...</text><text x="19" y="55.500" font-family="Inter" font-size="4" fill="#fff">Now</text><use href="#office-o" x="60" y="62" width="32" height="32"/></svg></div>
  <div class="app"><svg viewBox="0 0 98 98"><rect x="5" y="21" width="86" height="61" rx="2" fill="#ececec"/><path d="M5 21H91V28H5Z" fill="#fafafa"/><circle cx="10" cy="24.500" r="2" fill="#d33"/><circle cx="16.500" cy="24.500" r="2" fill="#b93"/><circle cx="23" cy="24.500" r="2" fill="#ddd"/><text x="37" y="26.500" font-family="Inter" font-size="4.500" fill="#999">SofToken II</text><text x="11" y="41" font-family="Inter" font-size="6" fill="#222" textLength="38" lengthAdjust="spacingAndGlyphs">Type your PIN code:</text><rect x="60" y="36" width="22" height="6" fill="#fff"/><text x="61" y="41" font-family="Inter" font-size="6" fill="#111" textLength="20">•••••••</text><use href="#softtoken" x="11" y="45" width="46" height="29"/><rect x="65" y="58" width="13" height="6" fill="#fff"/><text x="68" y="63.500" font-family="Inter" font-size="6" fill="#222">Go</text><text x="19" y="79" font-family="Inter" font-size="3.500" fill="#333">(Copied to clipboard)</text><use href="#softtoken" x="58" y="68" width="34" height="20"/></svg></div>
  <div class="app"><svg viewBox="0 0 98 98"><path d="M16 20L24 84Q26 91 49 91T74 84L81 20Z" fill="url(#g-trash)" opacity=".95"/><ellipse cx="48.500" cy="19.500" rx="32.500" ry="7.500" fill="#b7b8ba" stroke="#f2f2f2" stroke-width="2"/></svg></div>
</div>
<svg class="cursor" viewBox="0 0 50 84"><path d="M2 3V33L9 26L14 38L20 35L15 24H24Z" fill="#000" stroke="#fff" stroke-width="2.200"/><circle cx="23" cy="48" r="18" fill="#1cab12" stroke="#12850b" stroke-width="1.500"/><path d="M23 38V58M13 48H33" stroke="#fff" stroke-width="4.500"/></svg>
</body>
</html>
```
FILE: styles.css
```css
* { box-sizing: border-box; }
body {
  margin: 0;
  width: 2880px;
  height: 1800px;
  overflow: hidden;
  position: relative;
  background: #303030;
  font-family: "Noto Sans CJK SC", sans-serif;
  color: #424242;
}
svg { display: block; flex: none; }
.defs { position: absolute; width: 0; height: 0; }

/* Browser chrome */
.browser { display: flex; flex-direction: column; height: 1680px; background: #f6f6f6; }
.tabstrip {
  display: flex;
  height: 74px;
  flex: none;
  border-bottom: 2px solid #b0b0b0;
  font: 24px/58px Inter, sans-serif;
  color: #111;
}
.lights { display: flex; gap: 16px; padding: 26px 0 0 24px; width: 144px; flex: none; }
.lights i { width: 24px; height: 24px; border-radius: 50%; background: #dcdcdc; border: 1.500px solid #cfcfcf; }
.tabs { display: flex; padding-top: 17px; height: 74px; }
.tab { position: relative; display: flex; width: 127px; height: 57px; padding-left: 31px; }
.tab .shape { position: absolute; left: 0; top: 0; width: 156px; height: 57px; overflow: visible; }
.tab-fill { fill: #ebebeb; }
.tab-line { fill: none; stroke: #ababab; stroke-width: 1.500; }
.tab .fav { position: relative; width: 32px; height: 32px; margin-top: 13px; }
.tab span {
  position: relative;
  width: 51px;
  margin-left: 13px;
  overflow: hidden;
  white-space: nowrap;
  letter-spacing: -.8px;
  flex: none;
  mask-image: linear-gradient(90deg, #000 68%, rgba(0, 0, 0, .15) 100%);
}
.tab.active { z-index: 2; }
.tab.active .tab-fill { fill: #f6f6f6; }
.tab.active span { width: 20px; }
.tab .close { position: relative; width: 16px; height: 16px; margin: 22px 0 0 8px; }
.tab.sound span { width: 24px; }
.tab .mute { position: relative; width: 22px; height: 20px; margin: 20px 0 0 4px; }
.tab.blank span { width: 95px; margin-left: 3px; letter-spacing: -.5px; mask-image: linear-gradient(90deg, #000 75%, rgba(0, 0, 0, .15) 100%); }
.newtab { width: 66px; height: 34px; margin: 31px 0 0 22px; }
.profile { margin: 10px 0 0 20px; letter-spacing: -.6px; line-height: 60px; }

.toolbar { display: flex; height: 70px; flex: none; align-items: center; padding: 2px 0 0 22px; }
.nav-icon { width: 28px; height: 28px; margin-right: 28px; }
.omnibox {
  display: flex;
  align-items: center;
  width: 2566px;
  height: 54px;
  margin-left: -4px;
  padding: 0 10px 0 12px;
  background: #fff;
  border: 1.500px solid #b4b4b4;
  border-radius: 6px;
}
.info { width: 28px; height: 28px; }
.url { flex: 1; margin-left: 12px; padding-top: 2px; font: 28px/50px Inter, sans-serif; letter-spacing: .22px; color: #808080; }
.url b { font-weight: 400; color: #000; letter-spacing: 0; }
.star { width: 30px; height: 30px; }
.ext { width: 32px; height: 32px; margin-left: 20px; }
.dots { width: 8px; height: 28px; margin-left: 36px; fill: #808080; }

.bookmarks {
  display: flex;
  height: 50px;
  flex: none;
  padding-left: 27px;
  border-bottom: 2px solid #b5b5b5;
  font: 24px/45px Inter, sans-serif;
  color: #000;
}
.apps-grid { display: grid; grid-template-columns: repeat(3, 6px); grid-auto-rows: 6px; gap: 4px; padding-top: 7px; width: 26px; }
.r { background: #e33b36; }
.g { background: #2b9a57; }
.b { background: #2d84e8; }
.y { background: #dfa317; }
.bm-apps { margin-left: 11px; width: 94px; }
.bm-hint { width: 732px; white-space: nowrap; font-size: 22px; letter-spacing: .03px; }
.bm-link { color: #4a7fd8; font-size: 22px; letter-spacing: -.1px; flex: 1; white-space: nowrap; }
.folder { width: 32px; height: 26px; margin-top: 8px; }
.bm-other { width: 220px; margin-left: 8px; white-space: nowrap; letter-spacing: .25px; }

/* Site header */
.page { position: relative; height: 1486px; background: #f1f1f1; overflow: hidden; }
.site-header { display: flex; height: 120px; background: #323232; color: #b1b1b1; }
.logo { width: 930px; height: 120px; margin-right: 251px; overflow: visible; }
.cisco { font: 900 31px Lato, sans-serif; fill: #62b8e3; }
.devnet { font: 900 76px Lato, sans-serif; fill: url(#g-devnet); }
.dl { font: 700 41px "Noto Sans", sans-serif; fill: #ececec; }
.pf { font: 300 42px Lato, sans-serif; fill: #2f86ad; }
nav { display: flex; width: 1179px; padding-top: 18px; font-size: 29px; line-height: 102px; font-weight: 500; letter-spacing: -.52px; white-space: nowrap; }
nav .on { color: #fff; }
.n1 { width: 122px; }
.n2 { width: 253px; }
.n3 { width: 209px; }
.n4 { width: 221px; }
.search { width: 100px; padding: 34px 0 0 20px; border: solid #858585; border-width: 0 2px; }
.search svg { width: 56px; height: 56px; }
.avatar { width: 80px; height: 80px; margin: 24px 32px 0; }
.user { font-size: 30px; line-height: 126px; letter-spacing: -.5px; }

/* Panels */
main { padding: 60px; }
.top-row { display: flex; height: 602px; gap: 40px; }
.panel-head {
  display: flex;
  height: 122px;
  padding-left: 20px;
  background: #d5deea linear-gradient(90deg, #2ba4ef, #1074a9) 0 0 / 100% 10px no-repeat;
}
.labs { width: 1358px; }
.work { width: 1362px; }
.panel-body { margin-right: 8px; height: 480px; padding: 10px 60px 0 20px; background: #fff; }
.h-code { width: 52px; height: 60px; margin-top: 25px; }
.h-desk { width: 64px; height: 58px; margin-top: 24px; }
.h-cogs { width: 64px; height: 60px; margin-top: 25px; }
h2 { margin: 10px 0 0; font-size: 55px; line-height: 84px; font-weight: 200; letter-spacing: -.65px; white-space: nowrap; }
.t1 { padding-left: 12px; }
.t2 { padding-left: 12px; }
.t3 { padding-left: 12px; }
.view { margin: 10px 51px 0 auto; font: 28px/115px "Liberation Sans", sans-serif; letter-spacing: .1px; color: #1273a5; -webkit-text-stroke: .5px #1273a5; }
.row {
  display: flex;
  height: 94px;
  padding: 0 10px;
  font-size: 28px;
  line-height: 56px;
  letter-spacing: -.54px;
  white-space: nowrap;
  background: repeating-linear-gradient(90deg, #7c7c7c 0 2px, transparent 2px 4px) 0 92px / 100% 2px no-repeat;
}
.row span { -webkit-text-stroke: .2px #424242; }
.i-code { width: 26px; height: 30px; margin: 14px 6px 0 0; color: #1676ab; }
.i-srv { width: 30px; height: 24px; margin: 16px 6px 0 0; }
.row button {
  width: 176px;
  height: 72px;
  margin: 10px 0 0 auto;
  padding: 5px 0 0;
  border: 0;
  border-radius: 5px;
  background: #2ba4ef;
  color: #fff;
  font: 28px/67px "Liberation Sans", sans-serif;
  -webkit-text-stroke: .8px #fff;
}
.tools { margin-top: 40px; }
.cats {
  display: grid;
  grid-template-columns: 910px 892px 958px;
  grid-auto-rows: 294px;
  row-gap: 32px;
  height: 620px;
  padding-top: 56px;
  background: #fff;
}
.cat { padding-left: 22px; background: repeating-linear-gradient(180deg, #a5a5a5 0 2px, transparent 2px 4px) 0 0 / 2px 100% no-repeat; }
.cat:nth-child(3n+1) { padding-left: 40px; background: none; }
h3 { margin: 0; padding-top: 1px; font-size: 33px; line-height: 82px; font-weight: 400; letter-spacing: -.45px; color: #4a4a4a; }
.tiles { display: flex; gap: 20px; padding: 19px 0 0 20px; }
figure { margin: 0; min-width: 128px; display: flex; flex-direction: column; align-items: center; }
figure.wide { min-width: 136px; }
figure svg { width: 128px; height: 128px; }
figcaption { font-size: 22px; line-height: 65px; letter-spacing: -.1px; color: #4a4a4a; }
.tal { font: 700 43px "Noto Sans", sans-serif; fill: #77777c; }
.tal.lime { fill: #c1d72f; }
.my { font: 500 42px "Noto Sans CJK SC", sans-serif; }
.let { font: 700 36px "Noto Sans", sans-serif; fill: #fff; }

/* Floating pieces */
.fab {
  position: absolute;
  left: 2768px;
  top: 454px;
  width: 112px;
  height: 112px;
  border-radius: 50%;
  background: #2ba4ef;
  box-shadow: 0 4px 12px rgba(0, 0, 0, .4);
  display: flex;
  align-items: center;
  justify-content: center;
}
.fab svg { width: 30px; height: 28px; }
.dock-shade { position: absolute; left: 0; top: 1580px; width: 2880px; height: 100px; background: linear-gradient(rgba(0, 0, 0, 0), rgba(0, 0, 0, .07)); }
.tip {
  position: absolute;
  left: 1852px;
  top: 1592px;
  width: 117px;
  height: 52px;
  border-radius: 10px;
  background: #efefef;
  filter: drop-shadow(0 0 1.500px rgba(0, 0, 0, .45));
  font: 28px/51px Inter, sans-serif;
  letter-spacing: -.5px;
  text-align: center;
  z-index: 3;
}
.tip svg { position: absolute; left: 41px; top: 52px; width: 36px; height: 17px; }

/* Dock */
.dock {
  position: absolute;
  left: 78px;
  top: 1678px;
  width: 2723px;
  height: 122px;
  padding: 6px 0 0 8px;
  display: flex;
  background: #727272;
  border-radius: 10px 10px 0 0;
  box-shadow: 0 0 4px rgba(0, 0, 0, .6);
}
.app { width: 98.650px; height: 116px; flex: none; position: relative; }
.app svg { width: 98px; height: 98px; overflow: visible; }
.app.run::after { content: ""; position: absolute; left: 44px; top: 104px; width: 8px; height: 8px; border-radius: 50%; background: #000; }
.dock-sep { width: 2px; height: 90px; margin: 10px 20px 0 21px; background: #4c4c4c; flex: none; }
.cursor { position: absolute; left: 1926px; top: 1724px; width: 50px; height: 84px; z-index: 4; }
```
